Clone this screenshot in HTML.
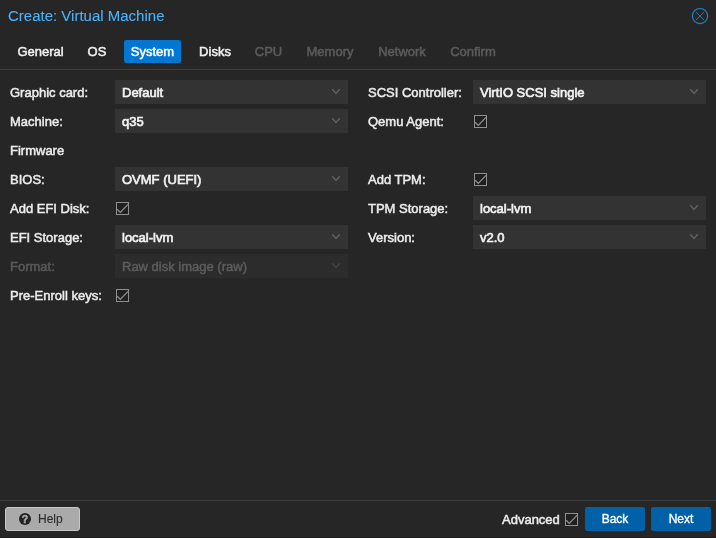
<!DOCTYPE html>
<html>
<head>
<meta charset="utf-8">
<title>Create: Virtual Machine</title>
<style>
html,body{margin:0;padding:0;}
body{width:716px;height:538px;background:#262626;overflow:hidden;position:relative;
 font-family:"Liberation Sans",Arial,Helvetica,sans-serif;font-size:13px;color:#f2f2f2;}
#root{position:absolute;left:0;top:0;width:716px;height:538px;will-change:transform;-webkit-text-stroke:0.5px currentColor;}
.abs{position:absolute;}
#title{left:8px;top:6px;transform:scaleY(1.02);transform-origin:0 15px;font-size:15px;line-height:20px;color:#4db2f8;white-space:nowrap;-webkit-text-stroke:0.1px currentColor;}
#close{left:691px;top:7px;width:18px;height:18px;}
.tab{position:absolute;top:40px;height:23px;line-height:21px;font-size:13px;color:#f2f2f2;text-align:center;border-radius:2px;white-space:nowrap;}
.tab span{display:inline-block;transform:scaleY(1.04);transform-origin:50% 0px;}
.tab.active{background:#0077d2;color:#fff;}
.tab.dis{color:#5c5c5c;}
#tabline{left:0;top:69px;width:716px;height:1px;background:#3d3d3d;}
.lbl{position:absolute;height:24px;line-height:26px;transform:scaleY(1.04);transform-origin:0 24.5px;font-size:13px;color:#ececec;white-space:nowrap;}
.fld{position:absolute;width:233px;height:24px;background:#333333;line-height:26px;font-size:13px;color:#f2f2f2;}
.fld span{position:absolute;left:7px;top:0;white-space:nowrap;transform:scaleY(1.04);transform-origin:0 24.5px;-webkit-text-stroke:0.65px currentColor;}
.fld svg{position:absolute;left:216px;top:8px;}
.dis{opacity:1;}
.lbl.dis{color:#5a5a5a;}
.fld.dis{background:#2c2c2c;color:#5e5e5e;}
.fld.dis span{-webkit-text-stroke:0.45px currentColor;}
.cb{position:absolute;width:13px;height:13px;}
#footline{left:0;top:500px;width:716px;height:1px;background:#3d3d3d;}
.btn{position:absolute;top:507px;height:24px;line-height:24px;border-radius:2px;font-size:12px;text-align:center;-webkit-text-stroke:0.2px currentColor;}
.btn.blue{background:#0060a8;color:#fff;-webkit-text-stroke:0.35px currentColor;}
#help{left:5px;width:73px;background:#aaaaaa;color:#222;border:1px solid #c8c8c8;height:22px;line-height:22px;border-radius:3px;}
</style>
</head>
<body>
<div id="root">
<div id="title" class="abs">Create: Virtual Machine</div>
<svg id="close" class="abs" viewBox="0 0 18 18"><circle cx="9" cy="9.05" r="7.6" fill="none" stroke="#2089c6" stroke-width="1.15"/><path d="M5.05 5.1 L12.95 13 M12.95 5.1 L5.05 13" stroke="#2089c6" stroke-width="0.9" fill="none"/></svg>

<div class="tab" style="left:10px;width:61px;"><span>General</span></div>
<div class="tab" style="left:80px;width:34px;"><span>OS</span></div>
<div class="tab active" style="left:124px;width:57px;"><span>System</span></div>
<div class="tab" style="left:191px;width:48px;"><span>Disks</span></div>
<div class="tab dis" style="left:247px;width:43px;"><span>CPU</span></div>
<div class="tab dis" style="left:298px;width:64px;"><span>Memory</span></div>
<div class="tab dis" style="left:370px;width:64px;"><span>Network</span></div>
<div class="tab dis" style="left:442px;width:62px;"><span>Confirm</span></div>
<div id="tabline" class="abs"></div>

<!-- left column -->
<div class="lbl" style="left:10px;top:80px;">Graphic card:</div>
<div class="fld" style="left:115px;top:80px;"><span>Default</span><svg width="10" height="7" viewBox="0 0 10 7"><path d="M1.2 1.2 L5 5.4 L8.8 1.2" fill="none" stroke="#606060" stroke-width="1.5"/></svg></div>
<div class="lbl" style="left:10px;top:109px;">Machine:</div>
<div class="fld" style="left:115px;top:109px;"><span>q35</span><svg width="10" height="7" viewBox="0 0 10 7"><path d="M1.2 1.2 L5 5.4 L8.8 1.2" fill="none" stroke="#606060" stroke-width="1.5"/></svg></div>
<div class="lbl" style="left:10px;top:138px;">Firmware</div>
<div class="lbl" style="left:10px;top:167px;">BIOS:</div>
<div class="fld" style="left:115px;top:167px;"><span>OVMF (UEFI)</span><svg width="10" height="7" viewBox="0 0 10 7"><path d="M1.2 1.2 L5 5.4 L8.8 1.2" fill="none" stroke="#606060" stroke-width="1.5"/></svg></div>
<div class="lbl" style="left:10px;top:196px;">Add EFI Disk:</div>
<svg class="cb" style="left:116px;top:202px;" viewBox="0 0 13 13"><rect x="0.5" y="0.5" width="12" height="12" fill="#202020" stroke="#909090"/><path d="M1.2 7.3 L4.3 10.4 L12 2.4" fill="none" stroke="#909090" stroke-width="1.3"/></svg>
<div class="lbl" style="left:10px;top:225px;">EFI Storage:</div>
<div class="fld" style="left:115px;top:225px;"><span>local-lvm</span><svg width="10" height="7" viewBox="0 0 10 7"><path d="M1.2 1.2 L5 5.4 L8.8 1.2" fill="none" stroke="#606060" stroke-width="1.5"/></svg></div>
<div class="lbl dis" style="left:10px;top:254px;">Format:</div>
<div class="fld dis" style="left:115px;top:254px;"><span>Raw disk image (raw)</span><svg width="10" height="7" viewBox="0 0 10 7"><path d="M1.2 1.2 L5 5.4 L8.8 1.2" fill="none" stroke="#424242" stroke-width="1.5"/></svg></div>
<div class="lbl" style="left:10px;top:283px;">Pre-Enroll keys:</div>
<svg class="cb" style="left:116px;top:289px;" viewBox="0 0 13 13"><rect x="0.5" y="0.5" width="12" height="12" fill="#202020" stroke="#909090"/><path d="M1.2 7.3 L4.3 10.4 L12 2.4" fill="none" stroke="#909090" stroke-width="1.3"/></svg>

<!-- right column -->
<div class="lbl" style="left:368px;top:80px;">SCSI Controller:</div>
<div class="fld" style="left:473px;top:80px;"><span>VirtIO SCSI single</span><svg width="10" height="7" viewBox="0 0 10 7"><path d="M1.2 1.2 L5 5.4 L8.8 1.2" fill="none" stroke="#606060" stroke-width="1.5"/></svg></div>
<div class="lbl" style="left:368px;top:109px;">Qemu Agent:</div>
<svg class="cb" style="left:474px;top:115px;" viewBox="0 0 13 13"><rect x="0.5" y="0.5" width="12" height="12" fill="#202020" stroke="#909090"/><path d="M1.2 7.3 L4.3 10.4 L12 2.4" fill="none" stroke="#909090" stroke-width="1.3"/></svg>
<div class="lbl" style="left:368px;top:167px;">Add TPM:</div>
<svg class="cb" style="left:474px;top:173px;" viewBox="0 0 13 13"><rect x="0.5" y="0.5" width="12" height="12" fill="#202020" stroke="#909090"/><path d="M1.2 7.3 L4.3 10.4 L12 2.4" fill="none" stroke="#909090" stroke-width="1.3"/></svg>
<div class="lbl" style="left:368px;top:196px;">TPM Storage:</div>
<div class="fld" style="left:473px;top:196px;"><span>local-lvm</span><svg width="10" height="7" viewBox="0 0 10 7"><path d="M1.2 1.2 L5 5.4 L8.8 1.2" fill="none" stroke="#606060" stroke-width="1.5"/></svg></div>
<div class="lbl" style="left:368px;top:225px;">Version:</div>
<div class="fld" style="left:473px;top:225px;"><span>v2.0</span><svg width="10" height="7" viewBox="0 0 10 7"><path d="M1.2 1.2 L5 5.4 L8.8 1.2" fill="none" stroke="#606060" stroke-width="1.5"/></svg></div>

<!-- footer -->
<div class="abs" style="left:0;top:537px;width:716px;height:1px;background:#1c1c1c;"></div>
<div class="abs" style="left:0;top:536px;width:1px;height:1px;background:#1e1e1e;"></div>
<div class="abs" style="left:715px;top:536px;width:1px;height:1px;background:#1e1e1e;"></div>
<div id="footline" class="abs"></div>
<div id="help" class="btn"><svg width="12" height="12" viewBox="0 0 12 12" style="position:absolute;left:13px;top:5px;"><circle cx="6" cy="6" r="6" fill="#222"/><text x="6" y="9.9" font-size="10.5" font-weight="bold" text-anchor="middle" fill="#aaaaaa" stroke="#aaaaaa" stroke-width="0.5" font-family="Liberation Sans, sans-serif">?</text></svg><span style="position:absolute;left:32px;top:0;color:#2a2a2a;-webkit-text-stroke:0.1px #2a2a2a;">Help</span></div>
<div class="lbl" style="left:502px;top:507px;">Advanced</div>
<svg class="cb" style="left:565px;top:513px;" viewBox="0 0 13 13"><rect x="0.5" y="0.5" width="12" height="12" fill="#202020" stroke="#909090"/><path d="M1.2 7.3 L4.3 10.4 L12 2.4" fill="none" stroke="#909090" stroke-width="1.3"/></svg>
<div class="btn blue" style="left:585px;width:60px;">Back</div>
<div class="btn blue" style="left:651px;width:60px;">Next</div>
</div>
</body>
</html>
